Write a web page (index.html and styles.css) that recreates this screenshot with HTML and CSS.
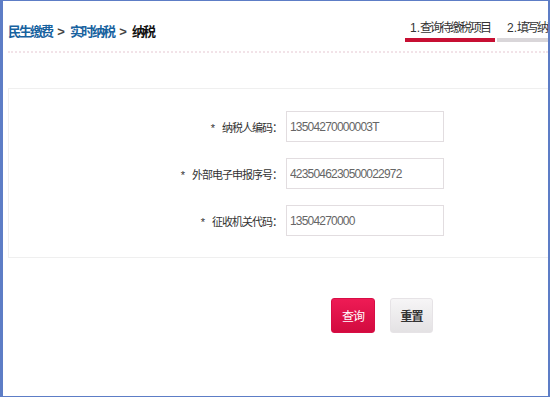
FILE: index.html
```html
<!DOCTYPE html>
<html lang="zh-CN">
<head>
    <meta charset="UTF-8">
    <meta name="viewport" content="width=device-width, initial-scale=1.0">
    <title>纳税</title>
    <link rel="stylesheet" href="styles.css">
</head>
<body>
    <div class="frame">
        <div class="header">
            <div class="crumbs">
                <a href="#" class="crumb-link">民生缴费</a>
                <span class="crumb-sep">&gt;</span>
                <a href="#" class="crumb-link">实时纳税</a>
                <span class="crumb-sep">&gt;</span>
                <span class="crumb-current">纳税</span>
            </div>
            <div class="steps">
                <div class="step active"><span class="step-no">1.</span>查询待缴税项目</div>
                <div class="step"><span class="step-no">2.</span>填写纳税信息</div>
            </div>
        </div>

        <form class="query-box" id="taxForm">
            <div class="form-row">
                <label for="payerCode" class="form-label"><span class="star">*</span>纳税人编码：</label>
                <input type="text" id="payerCode" class="form-input" value="13504270000003T">
            </div>
            <div class="form-row">
                <label for="reportNo" class="form-label"><span class="star">*</span>外部电子申报序号：</label>
                <input type="text" id="reportNo" class="form-input" value="4235046230500022972">
            </div>
            <div class="form-row">
                <label for="orgCode" class="form-label"><span class="star">*</span>征收机关代码：</label>
                <input type="text" id="orgCode" class="form-input" value="13504270000">
            </div>
        </form>

        <div class="button-row">
            <button type="submit" form="taxForm" class="btn btn-primary">查询</button>
            <button type="reset" form="taxForm" class="btn btn-plain">重置</button>
        </div>
    </div>
</body>
</html>
```

FILE: styles.css
```css
body {
    margin: 0;
    padding: 0;
    font-family: "Liberation Sans", "Noto Sans CJK SC", sans-serif;
    color: #333;
    background: #fff;
}

.frame {
    width: 550px;
    height: 397px;
    box-sizing: border-box;
    border: 1px solid #5d7dc6;
    border-left-width: 3px;
    border-right-width: 2px;
    overflow: hidden;
}

.header {
    display: flex;
    align-items: flex-end;
    height: 50px;
    margin-left: 5px;
    border-bottom: 2px dotted #f2e3e8;
    white-space: nowrap;
}

.crumbs {
    flex: 0 0 397px;
    display: flex;
    align-items: baseline;
    padding-bottom: 11px;
    font-size: 13px;
    font-weight: bold;
    letter-spacing: -2px;
}

.crumb-link {
    color: #17629f;
    text-decoration: none;
}

.crumb-sep {
    display: inline-block;
    width: 18px;
    text-align: center;
    color: #444;
    letter-spacing: 0;
}

.crumb-current {
    color: #111;
}

.steps {
    display: flex;
    gap: 2px;
    margin-bottom: 9px;
}

.step {
    flex: 0 0 90px;
    text-align: center;
    font-size: 12px;
    letter-spacing: -2px;
    color: #333;
    padding-bottom: 3px;
    border-bottom: 4px solid #d9d6d9;
}

.step-no {
    letter-spacing: 0;
}

.step.active {
    border-bottom-color: #c70f33;
}

.query-box {
    margin: 35px 0 0 5px;
    padding: 22px 0 21px;
    border: 1px solid #efefef;
    border-right: none;
    display: flex;
    flex-direction: column;
    gap: 16px;
}

.form-row {
    display: flex;
    align-items: center;
    gap: 4px;
}

.form-label {
    width: 273px;
    text-align: right;
    font-size: 11px;
    letter-spacing: -1px;
    color: #333;
}

.star {
    margin-right: 7px;
    letter-spacing: 0;
}

.form-input {
    width: 158px;
    height: 31px;
    box-sizing: border-box;
    padding: 0 3px;
    border: 1px solid #e2dde0;
    font-family: "Liberation Sans", sans-serif;
    font-size: 12px;
    letter-spacing: -0.8px;
    color: #666;
    outline: none;
}

.button-row {
    display: flex;
    gap: 15px;
    padding: 40px 0 0 328px;
}

.btn {
    height: 35px;
    border-radius: 3px;
    font-family: "Noto Sans CJK SC", sans-serif;
    font-size: 12px;
    letter-spacing: -1px;
    cursor: pointer;
}

.btn-primary {
    width: 44px;
    border: 1px solid #d80d45;
    background: linear-gradient(#ee1b55, #d20b3f);
    color: #fff;
}

.btn-plain {
    width: 43px;
    border: 1px solid #e6e3e6;
    background: linear-gradient(#f6f5f6, #e4e2e4);
    color: #333;
    font-weight: bold;
}
```
